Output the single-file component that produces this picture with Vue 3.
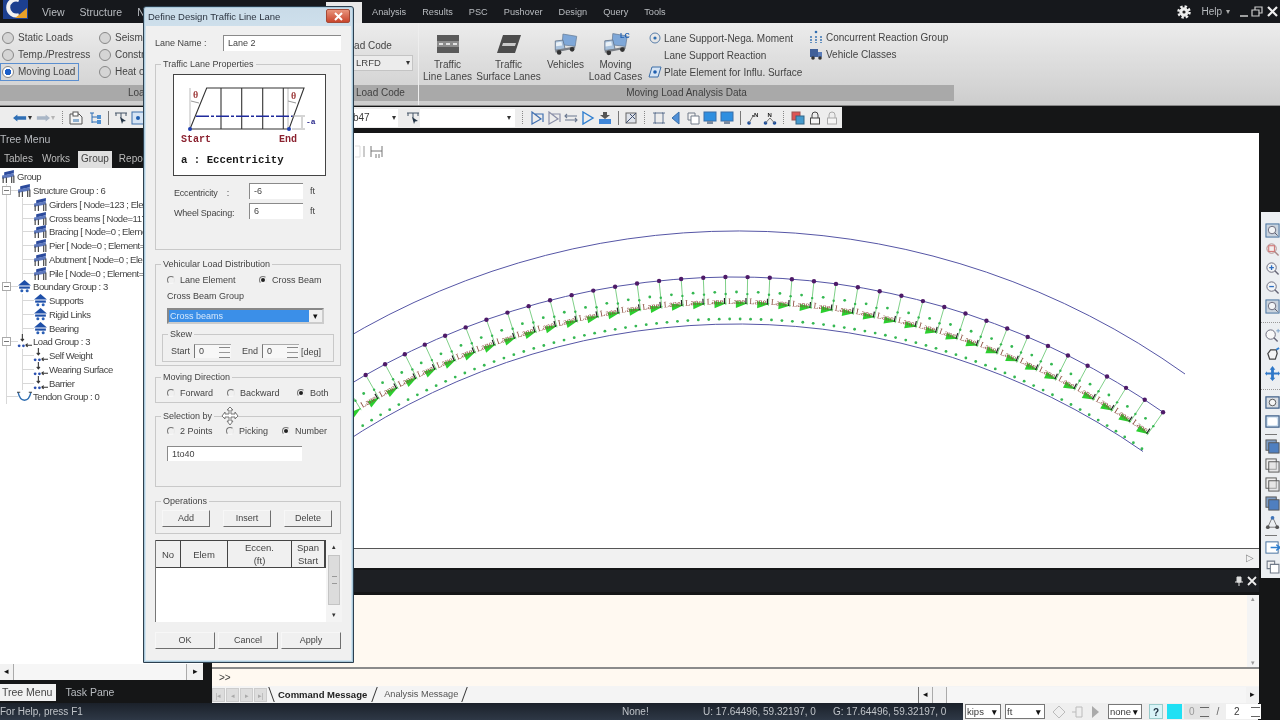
<script setup>
const leftMenu = ['View', 'Structure', 'Node']
const rightMenu = ['Analysis', 'Results', 'PSC', 'Pushover', 'Design', 'Query', 'Tools']

const treeRows = [
  { label: 'Group', icon: 'i-bridge', level: 0 },
  { label: 'Structure Group : 6', icon: 'i-bridge', level: 1, box: true },
  { label: 'Girders [ Node=123 ; Element=120 ]', icon: 'i-bridge', level: 2 },
  { label: 'Cross beams [ Node=117 ; Element=78 ]', icon: 'i-bridge', level: 2 },
  { label: 'Bracing [ Node=0 ; Element=0 ]', icon: 'i-bridge', level: 2 },
  { label: 'Pier [ Node=0 ; Element=0 ]', icon: 'i-bridge', level: 2 },
  { label: 'Abutment [ Node=0 ; Element=0 ]', icon: 'i-bridge', level: 2 },
  { label: 'Pile [ Node=0 ; Element=0 ]', icon: 'i-bridge', level: 2 },
  { label: 'Boundary Group : 3', icon: 'i-house', level: 1, box: true },
  { label: 'Supports', icon: 'i-house', level: 2 },
  { label: 'Rigid Links', icon: 'i-house', level: 2 },
  { label: 'Bearing', icon: 'i-house', level: 2 },
  { label: 'Load Group : 3', icon: 'i-load', level: 1, box: true },
  { label: 'Self Weight', icon: 'i-load', level: 2 },
  { label: 'Wearing Surface', icon: 'i-load', level: 2 },
  { label: 'Barrier', icon: 'i-load', level: 2 },
  { label: 'Tendon Group : 0', icon: 'i-tendon', level: 1 }
]

const toolsA = ['i-check', 'i-check2', 'i-swap', 'i-play', 'i-stack', 'sep', 'i-diag', 'grip', 'i-frame', 'i-left', 'i-copy', 'i-screen', 'i-screen', 'sep', 'i-north', 'i-north2', 'grip', 'i-pages', 'i-lock', 'i-lock2']
const railTools = ['i-zoombox', 'i-zoomred', 'i-zoomin', 'i-zoomout', 'i-zoombox', 'grip', 'i-lens', 'i-orbit', 'i-pan', 'grip', 'i-view', 'i-view2', 'line', 'i-cube', 'i-cube2', 'i-cube2', 'i-cube', 'i-axes', 'line', 'i-enter', 'i-copy']

// bridge deck, all in page coordinates so the svg viewBox can be the canvas rect
const CX = 735
const CY = 1022
const R = 745
const STEP = 1.705
const rad = d => (d * Math.PI) / 180
const at = (r, a) => [CX + r * Math.sin(rad(a)), CY - r * Math.cos(rad(a))]
const fmt = p => p.map(n => n.toFixed(1)).join(' ')

const stations = []
for (let i = 0; i < 40; i++) stations.push(35.07 - i * STEP)

const spokes = stations.map(a => {
  const [x1, y1] = at(R, a)
  const [x2, y2] = at(R - 28, a)
  return { x1, y1, x2, y2 }
})
const topDots = stations.map(a => at(R, a))
const spokeDots = stations.map(a => at(R - 17, a))
const midDots = stations.map(a => at(R - 15, a - STEP / 2))
const lowDots = []
for (let i = 0; i < 80; i++) lowDots.push(at(R - 42, 35.37 - (i * STEP) / 2))

const wedges = stations.map(a =>
  [at(R - 26, a + 0.1), at(R - 31, a - 0.9), at(R - 24, a - 0.9)].map(fmt).join(',')
)
const ticks = stations.slice(0, 39).map(a => {
  const [x1, y1] = at(R - 21, a - 0.1)
  const [x2, y2] = at(R - 27, a - 0.1)
  return { x1, y1, x2, y2 }
})
const labels = stations.slice(0, 39).map(a => {
  const [x, y] = at(R - 25, a - STEP / 2)
  return { x, y, rot: a - STEP / 2 }
})

const arc = (cx, cy, r, x1, x2) => {
  const y = x => cy - Math.sqrt(r * r - (x - cx) * (x - cx))
  return `M${x1} ${y(x1).toFixed(1)}A${r} ${r} 0 0 1 ${x2} ${y(x2).toFixed(1)}`
}
const outerLine = arc(738, 1001, 770, 340, 1185)
const upperEdge = arc(CX, CY, R, 340, 1163)
const lowerEdge = arc(737, 1034, 710, 340, 1143)
</script>

<template>
  <div class="app">
    <!-- shared icons -->
    <svg class="defs" width="0" height="0">
      <symbol id="i-bridge" viewBox="0 0 14 14"><path d="M3 3l9-2v3l-9 2z" fill="#2b4a9c"/><path d="M1 6l11-2v3L1 9z" fill="#5d78bd"/><path d="M2 8v5M5 8v5M10 7v6M12 6v7" stroke="#333" fill="none"/></symbol>
      <symbol id="i-house" viewBox="0 0 14 14"><path d="M7 1l6 5H1z" fill="#1e4fa8"/><rect x="2" y="7" width="10" height="2" fill="#1e4fa8"/><circle cx="4.500" cy="11" r="1.400" fill="#2b5fb5"/><circle cx="9.500" cy="11" r="1.400" fill="#2b5fb5"/></symbol>
      <symbol id="i-load" viewBox="0 0 14 14"><path d="M5 0v6M3.500 4.500L5 6.500l1.500-2M8 10.500h6M8 10.500l2-1.500M8 10.500l2 1.500" stroke="#333" fill="none"/><circle cx="2" cy="11" r="1.300" fill="#2a50b0"/><circle cx="6" cy="11" r="1.300" fill="#2a50b0"/></symbol>
      <symbol id="i-tendon" viewBox="0 0 14 14"><path d="M1 3c2 10 10 10 12 0" stroke="#2f6db0" fill="none" stroke-width="1.300"/><path d="M0 3h3M11 3h3" stroke="#444"/></symbol>
      <symbol id="i-check" viewBox="0 0 14 14"><path d="M2 1v12l9-5zM5 3h8v8" fill="none" stroke="#3f6fb0" stroke-width="1.200"/></symbol>
      <symbol id="i-check2" viewBox="0 0 14 14"><path d="M2 1v12l9-5zM5 3h8v8" fill="none" stroke="#8a8fa8" stroke-width="1.200"/></symbol>
      <symbol id="i-swap" viewBox="0 0 14 14"><path d="M1 5h12M1 9h12M3 3L1 5l2 2M11 7l2 2-2 2" fill="none" stroke="#6a7890" stroke-width="1.100"/></symbol>
      <symbol id="i-play" viewBox="0 0 14 14"><path d="M2 1l10 6-10 6z" fill="none" stroke="#2f7fd0" stroke-width="1.400"/></symbol>
      <symbol id="i-stack" viewBox="0 0 14 14"><path d="M5 1h4v3h3l-5 4-5-4h3z" fill="#555"/><rect x="1" y="8" width="12" height="5" fill="#3f86d8"/></symbol>
      <symbol id="i-diag" viewBox="0 0 14 14"><rect x="2" y="2" width="10" height="10" fill="#dfe3ea" stroke="#666"/><path d="M2 12L12 2M6 3l5 5" stroke="#405070"/></symbol>
      <symbol id="i-frame" viewBox="0 0 14 14"><path d="M3 2h8v10H3zM1 2h3M10 2h3M1 12h3M10 12h3" fill="none" stroke="#5f7390"/></symbol>
      <symbol id="i-left" viewBox="0 0 14 14"><path d="M10 1v12L3 7z" fill="#4f90d8" stroke="#3a6fa8"/></symbol>
      <symbol id="i-copy" viewBox="0 0 14 14"><path d="M2 2h7v7H2z" fill="#f3f3f3" stroke="#707a88"/><path d="M5 5h8v8H5z" fill="#fff" stroke="#707a88"/></symbol>
      <symbol id="i-screen" viewBox="0 0 14 14"><rect x="1" y="1" width="12" height="9" fill="#2f8fe0" stroke="#3a6fa8"/><rect x="4" y="10" width="6" height="3" fill="#7a8aa0"/></symbol>
      <symbol id="i-north" viewBox="0 0 14 14"><circle cx="3" cy="12" r="1.800" fill="#1d4f9c"/><circle cx="7" cy="5" r="1" fill="#333"/><path d="M3 12l4-7" stroke="#777"/><text x="8" y="6" font-size="6" font-family="Liberation Sans" font-weight="700" fill="#222">N</text></symbol>
      <symbol id="i-north2" viewBox="0 0 14 14"><circle cx="2.500" cy="12" r="1.800" fill="#1d4f9c"/><circle cx="11.500" cy="12" r="1.800" fill="#1d4f9c"/><path d="M2.500 12L7 7l4.500 5" stroke="#777" fill="none"/><text x="4.500" y="6" font-size="6" font-family="Liberation Sans" font-weight="700" fill="#222">N</text></symbol>
      <symbol id="i-pages" viewBox="0 0 14 14"><rect x="1" y="1" width="8" height="8" fill="#d55" stroke="#955"/><rect x="5" y="5" width="8" height="8" fill="#49c" stroke="#368"/></symbol>
      <symbol id="i-lock" viewBox="0 0 14 14"><path d="M4 7V4a3 3 0 016 0v3" fill="none" stroke="#444"/><rect x="2.500" y="7" width="9" height="6" fill="#f5f5f5" stroke="#444"/></symbol>
      <symbol id="i-lock2" viewBox="0 0 14 14"><path d="M4 7V4a3 3 0 016 0v3" fill="none" stroke="#aaa"/><rect x="2.500" y="7" width="9" height="6" fill="#f5f5f5" stroke="#aaa"/></symbol>
      <symbol id="i-zoombox" viewBox="0 0 16 16"><rect x="1" y="1" width="14" height="14" fill="#c9d3de" stroke="#3f6c9c"/><circle cx="7.500" cy="7.500" r="4" fill="#f2f4f6" stroke="#667"/><path d="M10.500 10.500l3 3" stroke="#556"/></symbol>
      <symbol id="i-zoomred" viewBox="0 0 16 16"><circle cx="7" cy="7" r="5" fill="#f2eeee" stroke="#a88"/><path d="M10.500 10.500l4 4" stroke="#a88" stroke-width="1.500"/><rect x="4" y="4" width="6" height="6" fill="none" stroke="#c66"/></symbol>
      <symbol id="i-zoomin" viewBox="0 0 16 16"><circle cx="7" cy="7" r="5" fill="#f2f4f6" stroke="#667"/><path d="M10.500 10.500l4 4" stroke="#667" stroke-width="1.500"/><path d="M4.500 7h5M7 4.500v5" stroke="#2f6fc0" stroke-width="1.400"/></symbol>
      <symbol id="i-zoomout" viewBox="0 0 16 16"><circle cx="7" cy="7" r="5" fill="#f2f4f6" stroke="#667"/><path d="M10.500 10.500l4 4" stroke="#667" stroke-width="1.500"/><path d="M4.500 7h5" stroke="#2f6fc0" stroke-width="1.400"/></symbol>
      <symbol id="i-lens" viewBox="0 0 16 16"><circle cx="6" cy="7" r="5" fill="#f8f8f8" stroke="#667"/><path d="M9.500 10.500l4 4" stroke="#667" stroke-width="1.500"/><path d="M12 3h4M14 1v4" stroke="#7aa0c8"/></symbol>
      <symbol id="i-orbit" viewBox="0 0 16 16"><path d="M3 7l3-4h6l1 4-2 6H5z" fill="#f4f4f4" stroke="#444" stroke-width="1.300"/><path d="M12 3l3-2" stroke="#2f7fd0" stroke-width="2"/></symbol>
      <symbol id="i-pan" viewBox="0 0 16 16"><path d="M8 0l3 4H9.500v3H14V5.500l2 2.500-2 2.500V9H9.500v3.500H11L8 16l-3-3.500h1.500V9H2v1.500L0 8l2-2.500V7h4.500V4H5z" fill="#2f78c8"/></symbol>
      <symbol id="i-view" viewBox="0 0 16 16"><rect x="1" y="2" width="14" height="12" fill="#d8dde3" stroke="#3f5f88" stroke-width="1.300"/><circle cx="8" cy="8" r="3.500" fill="#f5f5f5" stroke="#555"/></symbol>
      <symbol id="i-view2" viewBox="0 0 16 16"><rect x="1" y="2" width="14" height="12" fill="#cfe0f0" stroke="#3f5f88" stroke-width="1.300"/><rect x="3" y="4" width="10" height="8" rx="2" fill="#fff"/></symbol>
      <symbol id="i-cube" viewBox="0 0 16 16"><rect x="1" y="1" width="11" height="11" fill="#7f9dc4" stroke="#555"/><rect x="4" y="4" width="11" height="11" fill="#4f7fc0" stroke="#555"/></symbol>
      <symbol id="i-cube2" viewBox="0 0 16 16"><rect x="1" y="1" width="11" height="11" fill="#eee" stroke="#555"/><rect x="4" y="4" width="11" height="11" fill="#ddd" fill-opacity=".5" stroke="#555"/></symbol>
      <symbol id="i-axes" viewBox="0 0 16 16"><path d="M8 2L3 13M8 2l5 11M3 13h10" stroke="#777" fill="none"/><circle cx="8" cy="3" r="2" fill="#3f74b8"/><circle cx="3" cy="13" r="2" fill="#555"/><circle cx="13" cy="13" r="2" fill="#555"/></symbol>
      <symbol id="i-enter" viewBox="0 0 16 16"><rect x="1" y="2" width="13" height="12" fill="#fff" stroke="#3f6c9c"/><path d="M6 8h10M12 5l4 3-4 3" stroke="#2f7fd0" stroke-width="1.500" fill="none"/></symbol>
      <symbol id="i-truck" viewBox="0 0 34 30"><path d="M13 2l18 3-2 13-17-2z" fill="#7ea7d8" stroke="#6b7f99"/><path d="M3 11l10-1 3 12-13 1z" fill="#a9c2dd" stroke="#5d6f85"/><path d="M4 13l7-1 1 5-8 1z" fill="#e9f0f6"/><path d="M3 23l26-5v3L3 26z" fill="#7b8087"/><circle cx="8" cy="26" r="3" fill="#333"/><circle cx="25" cy="22" r="3" fill="#333"/></symbol>
    </svg>

    <header class="menu-bar">
      <svg class="logo" width="30" height="22" viewBox="0 0 30 22">
        <rect x="2" y="-2" width="25" height="21" fill="#1c3f8f"/>
        <path d="M18 0a8 8 0 100 15" fill="none" stroke="#f2f2f2" stroke-width="4"/>
        <path d="M19 14l7-6v10H14z" fill="#e8a028"/>
      </svg>
      <nav class="menu-left">
        <span v-for="m in leftMenu" :key="m">{{ m }}</span>
        <span class="menu-active"></span>
      </nav>
      <nav class="menu-right">
        <span v-for="m in rightMenu" :key="m">{{ m }}</span>
      </nav>
      <div class="win-box">
        <svg width="14" height="14" viewBox="0 0 14 14"><circle cx="7" cy="7" r="4.200" fill="#eee" stroke="#eee" stroke-width="1"/><circle cx="7" cy="7" r="5.500" fill="none" stroke="#eee" stroke-width="2.500" stroke-dasharray="2.400 1.900"/><circle cx="7" cy="7" r="1.600" fill="#222"/></svg>
        <span class="help">Help</span>
        <span class="caret-sm">▾</span>
        <svg width="46" height="14" viewBox="0 0 46 14">
          <path d="M6 11h8" stroke="#ccc" stroke-width="1.500"/>
          <path d="M18 5h7v6h-7zM21 5V2h7v6h-3" fill="none" stroke="#ccc" stroke-width="1.200"/>
          <path d="M34 2l9 9M43 2l-9 9" stroke="#eee" stroke-width="2.200"/>
        </svg>
      </div>
    </header>

    <section class="ribbon">
      <div class="panel panel-load">
        <div class="panel-body load-types">
          <div class="load-col">
            <label class="ribbon-radio">Static Loads</label>
            <label class="ribbon-radio">Temp./Prestress</label>
            <label class="ribbon-radio selected">Moving Load</label>
          </div>
          <div class="load-col second">
            <label class="ribbon-radio">Seismic</label>
            <label class="ribbon-radio">Construction</label>
            <label class="ribbon-radio">Heat of Hydration</label>
          </div>
        </div>
        <div class="panel-foot foot-load">Load Type</div>
      </div>
      <div class="panel panel-code">
        <div class="panel-body code-body">
          <div class="code-label">Load Code</div>
          <div class="code-select">LRFD<span class="caret-sm dark">▾</span></div>
        </div>
        <div class="panel-foot foot-code">Load Code</div>
      </div>
      <div class="panel panel-moving">
        <div class="panel-body moving-body">
          <div class="big w57">
            <svg width="24" height="18" viewBox="0 0 24 18"><rect x="1" width="22" height="18" fill="#5a5a5a"/><rect x="1" y="6" width="22" height="6" fill="#8c8c8c"/><path d="M3 9h4M10 9h4M17 9h4" stroke="#e2e2e2" stroke-width="2"/></svg>
            <span>Traffic<br>Line Lanes</span>
          </div>
          <div class="big w65">
            <svg width="24" height="18" viewBox="0 0 24 18"><path d="M6 0h18l-6 18H0z" fill="#4c4c4c"/><path d="M6 8h13l-1 3H5z" fill="#c9c9c9"/></svg>
            <span>Traffic<br>Surface Lanes</span>
          </div>
          <div class="big w49">
            <svg width="26" height="24" viewBox="0 0 34 30"><use href="#i-truck"/></svg>
            <span>Vehicles</span>
          </div>
          <div class="big w51">
            <svg width="30" height="26" viewBox="0 0 34 30"><use href="#i-truck"/><text x="22" y="8" font-size="9" font-weight="700" font-family="Liberation Sans" fill="#1f5fb0">LC</text></svg>
            <span>Moving<br>Load Cases</span>
          </div>
          <div class="small-col first">
            <div class="small-item">
              <svg width="14" height="14" viewBox="0 0 14 14"><circle cx="7" cy="7" r="5" fill="none" stroke="#5a7faa"/><circle cx="7" cy="7" r="1.600" fill="#2f6db0"/></svg>
              Lane Support-Nega. Moment
            </div>
            <div class="small-item"><i class="no-icon"></i>Lane Support Reaction</div>
            <div class="small-item">
              <svg width="14" height="14" viewBox="0 0 14 14"><path d="M4 2h9l-3 10H1z" fill="#d6e4f4" stroke="#3d6ea8"/><circle cx="7" cy="7" r="1.800" fill="#1f5fb0"/></svg>
              Plate Element for Influ. Surface
            </div>
          </div>
          <div class="small-col second">
            <div class="small-item">
              <svg width="14" height="14" viewBox="0 0 14 14"><circle cx="7" cy="2" r="1.300" fill="#2f6db0"/><path d="M2 6v7M7 6v7M12 6v7" stroke="#2f6db0" stroke-width="1.400" stroke-dasharray="2 1"/></svg>
              Concurrent Reaction Group
            </div>
            <div class="small-item">
              <svg width="14" height="14" viewBox="0 0 14 14"><rect x="1" y="2" width="8" height="8" fill="#3f5f98"/><path d="M9 5h4v5H9z" fill="#5a7cb8"/><circle cx="4" cy="11" r="1.800" fill="#333"/><circle cx="11" cy="11" r="1.800" fill="#333"/></svg>
              Vehicle Classes
            </div>
          </div>
        </div>
        <div class="panel-foot">Moving Load Analysis Data</div>
      </div>
    </section>

    <section class="toolbars">
      <div class="strip">
        <div class="strip-left">
          <svg class="nav-arrow" width="14" height="10" viewBox="0 0 16 10"><path d="M0 5l5-4v2h10v4H5v2z" fill="#2f6fb5"/></svg>
          <span class="caret-sm dark">▾</span>
          <svg class="nav-arrow" width="14" height="10" viewBox="0 0 16 10"><path d="M16 5l-5-4v2H1v4h10v2z" fill="#a9b6c6"/></svg>
          <span class="caret-sm faint">▾</span>
          <i class="grip"></i>
          <svg class="ico wide" viewBox="0 0 14 14"><path d="M1 3h9l3 3v7H1z" fill="#f4f4f4" stroke="#555"/><rect x="4" y="1" width="5" height="4" fill="#fff" stroke="#555"/><rect x="4" y="8" width="6" height="3" fill="#8fb0d0"/></svg>
          <svg class="ico" viewBox="0 0 14 14"><path d="M2 2h4M4 2v10M4 6h5M4 11h5" stroke="#2f6fb5" fill="none"/><rect x="9" y="4" width="4" height="4" fill="#4f8fd0"/><rect x="9" y="9" width="4" height="4" fill="#4f8fd0"/></svg>
          <i class="tool-sep"></i>
          <svg class="ico flat" viewBox="0 0 14 14"><path d="M1 2h12M7 2v5M2 2v3M12 2v3" stroke="#456" fill="none"/><path d="M6 6l6 4-3 .5L8 13z" fill="#234"/></svg>
          <svg class="ico" viewBox="0 0 14 14"><rect x="1" y="1" width="12" height="12" fill="#d6e4f4" stroke="#3d6ea8"/><circle cx="7" cy="7" r="2" fill="#1f5fb0"/></svg>
        </div>
        <div class="combo combo-a">b47<span class="caret-sm dark">▾</span></div>
        <svg class="ico cursor-ico" viewBox="0 0 14 14"><path d="M1 2h12M7 2v5M2 2v3M12 2v3" stroke="#456" fill="none"/><path d="M6 6l6 4-3 .5L8 13z" fill="#234"/></svg>
        <div class="combo combo-b"><span class="caret-sm dark">▾</span></div>
        <i class="grip"></i>
        <template v-for="(t, i) in toolsA" :key="i">
          <i v-if="t === 'sep'" class="tool-sep"></i>
          <i v-else-if="t === 'grip'" class="grip"></i>
          <svg v-else class="ico" viewBox="0 0 14 14"><use :href="'#' + t"/></svg>
        </template>
      </div>
    </section>

    <main class="work">
      <aside class="side">
        <div class="side-title">Tree Menu</div>
        <div class="side-tabs">
          <span>Tables</span><span>Works</span><span class="on">Group</span><span>Report</span>
        </div>
        <div class="tree">
          <div
            v-for="r in treeRows"
            :key="r.label"
            class="tree-row"
            :class="'lv' + r.level"
          >
            <i v-if="r.box" class="minus"></i>
            <svg class="tree-ico" viewBox="0 0 14 14"><use :href="'#' + r.icon"/></svg>
            <span>{{ r.label }}</span>
          </div>
        </div>
        <div class="side-scroll">
          <span class="sb-btn">◂</span>
          <span class="sb-track"></span>
          <span class="sb-btn">▸</span>
        </div>
        <div class="side-bottom">
          <span class="on">Tree Menu</span><span>Task Pane</span>
        </div>
      </aside>

      <div class="center">
        <div class="canvas">
          <svg class="drawing" viewBox="212 133 1047 415" width="1047" height="415">
            <path d="M355 146h5v11h-5" fill="none" stroke="#ddd"/>
            <path d="M364 146v11" stroke="#999"/>
            <path d="M371 146v11M382 146v11M371 151h11M376 154v4M379 154v4" stroke="#777" fill="none"/>

            <path :d="outerLine" class="edge"/>
            <path :d="upperEdge" class="edge"/>
            <path :d="lowerEdge" class="edge"/>
            <line v-for="(s, i) in spokes" :key="'s' + i" :x1="s.x1" :y1="s.y1" :x2="s.x2" :y2="s.y2" class="spoke"/>
            <circle v-for="(d, i) in midDots" :key="'m' + i" :cx="d[0]" :cy="d[1]" r="1.400" class="gdot"/>
            <circle v-for="(d, i) in spokeDots" :key="'p' + i" :cx="d[0]" :cy="d[1]" r="1.200" class="gdot"/>
            <circle v-for="(d, i) in lowDots" :key="'l' + i" :cx="d[0]" :cy="d[1]" r="1.400" class="gdot"/>
            <polygon v-for="(w, i) in wedges" :key="'w' + i" :points="w" class="wedge"/>
            <text
              v-for="(l, i) in labels"
              :key="'t' + i"
              :transform="`translate(${l.x.toFixed(1)} ${l.y.toFixed(1)}) rotate(${l.rot.toFixed(1)})`"
              class="lane-text"
            >Lane</text>
            <line v-for="(s, i) in ticks" :key="'k' + i" :x1="s.x1" :y1="s.y1" :x2="s.x2" :y2="s.y2" class="tick"/>
            <circle v-for="(d, i) in topDots" :key="'d' + i" :cx="d[0]" :cy="d[1]" r="2.200" class="pdot"/>
          </svg>
        </div>
        <div class="canvas-scroll"><span class="hollow-arrow">▷</span></div>
        <div class="out-title">
          <svg width="10" height="10" viewBox="0 0 10 10"><path d="M3 1h4v5H3zM1 6h8M5 6v4" stroke="#ddd" fill="#ddd"/></svg>
          <svg width="10" height="10" viewBox="0 0 10 10"><path d="M1 1l8 8M9 1L1 9" stroke="#eee" stroke-width="1.800"/></svg>
        </div>
        <div class="out-log"><span class="log-bar"><b>▴</b><b>▾</b></span></div>
        <div class="out-prompt">&gt;&gt;</div>
        <div class="out-tabs">
          <div class="nav-btns"><span>|◂</span><span>◂</span><span>▸</span><span>▸|</span></div>
          <span class="msg-tab active">Command Message</span>
          <span class="msg-tab other">Analysis Message</span>
          <div class="out-scroll">
            <span class="sb-btn">◂</span>
            <span class="sb-btn"></span>
            <span class="sb-track"></span>
            <span class="sb-btn">▸</span>
          </div>
        </div>
      </div>

      <div class="rail">
        <template v-for="(t, i) in railTools" :key="i">
          <i v-if="t === 'grip'" class="rail-grip"></i>
          <i v-else-if="t === 'line'" class="rail-line"></i>
          <svg v-else class="rail-ico" viewBox="0 0 16 16"><use :href="'#' + t"/></svg>
        </template>
      </div>
    </main>

    <footer class="status">
      <div class="status-dark">
        <span class="st-help">For Help, press F1</span>
        <span class="st-none">None!</span>
        <span class="st-u">U: 17.64496, 59.32197, 0</span>
        <span class="st-g">G: 17.64496, 59.32197, 0</span>
      </div>
      <div class="status-light">
        <div class="st-select w36">kips<b>▾</b></div>
        <div class="st-select w40">ft<b>▾</b></div>
        <svg class="st-ico" viewBox="0 0 14 14"><path d="M7 1l6 6-6 6-6-6z" fill="none" stroke="#bbb"/></svg>
        <svg class="st-ico" viewBox="0 0 14 14"><path d="M2 7h4M6 2h6v10H6z" fill="none" stroke="#bbb"/></svg>
        <svg class="st-ico" viewBox="0 0 14 14"><path d="M4 1l7 6-7 6z" fill="#aaa"/></svg>
        <div class="st-select w33">none<b>▾</b></div>
        <span class="st-q">?</span>
        <span class="st-color"></span>
        <div class="st-spin off">0<i></i></div>
        <span class="st-slash">/</span>
        <div class="st-spin">2<i></i></div>
      </div>
    </footer>

    <!-- floating dialog -->
    <div class="dialog">
      <div class="dlg-title">
        <span>Define Design Traffic Line Lane</span>
        <span class="dlg-close">
          <svg width="9" height="9" viewBox="0 0 9 9"><path d="M1 1l7 7M8 1L1 8" stroke="#fff" stroke-width="2"/></svg>
        </span>
      </div>
      <div class="dlg-body">
        <div class="name-row">
          <label>Lane Name :</label>
          <div class="field name-field">Lane 2</div>
        </div>

        <fieldset class="fs fs-props">
          <legend>Traffic Lane Properties</legend>
          <svg class="lane-pic" viewBox="173 75 153 102" width="153" height="102">
            <path d="M190 89v41M288 89v41" stroke="#bbb"/>
            <path d="M190 130l16.700-41H304l-15 41zM221 89v41M241.700 89v41M262.700 89v41M283.300 89v41" fill="none" stroke="#333" stroke-width="1.100"/>
            <path d="M196 117.300h97" stroke="#1f2a9c" stroke-width="1.600" stroke-dasharray="13 2 3 2"/>
            <circle cx="190" cy="130" r="2" fill="#1f3fb0"/>
            <circle cx="289" cy="130" r="2" fill="#1f3fb0"/>
            <path d="M292 117h13M292 130h13M302 118v11" stroke="#aaa"/>
            <path d="M191 102l8 2M288 102l8 2" stroke="#999"/>
            <text x="193" y="99" class="pic-theta">θ</text>
            <text x="291" y="100" class="pic-theta">θ</text>
            <text x="306" y="125" class="pic-a">-a</text>
            <text x="181" y="143" class="pic-start">Start</text>
            <text x="279" y="143" class="pic-start">End</text>
            <text x="181" y="164" class="pic-ecc">a : Eccentricity</text>
          </svg>
          <div class="prop-row first">
            <label class="ecc-label"><span>Eccentricity</span><span>:</span></label>
            <div class="field prop-field">-6</div>
            <span>ft</span>
          </div>
          <div class="prop-row">
            <label>Wheel Spacing:</label>
            <div class="field prop-field">6</div>
            <span>ft</span>
          </div>
        </fieldset>

        <fieldset class="fs fs-vehicular">
          <legend>Vehicular Load Distribution</legend>
          <div class="opts opts-two">
            <span class="opt"><i class="radio"></i>Lane Element</span>
            <span class="opt"><i class="radio checked"></i>Cross Beam</span>
          </div>
          <div class="group-label">Cross Beam Group</div>
          <div class="cb-select">
            <span class="cb-value">Cross beams</span>
            <span class="cb-btn">▾</span>
          </div>
          <fieldset class="fs fs-skew">
            <legend>Skew</legend>
            <div class="skew-row">
              <span>Start</span>
              <div class="spin">0<i></i></div>
              <span class="skew-end">End</span>
              <div class="spin">0<i></i></div>
              <span class="deg">[deg]</span>
            </div>
          </fieldset>
        </fieldset>

        <fieldset class="fs fs-moving">
          <legend>Moving Direction</legend>
          <div class="opts opts-three">
            <span class="opt"><i class="radio"></i>Forward</span>
            <span class="opt"><i class="radio"></i>Backward</span>
            <span class="opt"><i class="radio checked"></i>Both</span>
          </div>
        </fieldset>

        <fieldset class="fs fs-selection">
          <legend>Selection by</legend>
          <div class="opts opts-sel">
            <span class="opt"><i class="radio"></i>2 Points</span>
            <span class="opt"><i class="radio"></i>Picking</span>
            <span class="opt"><i class="radio checked"></i>Number</span>
          </div>
          <div class="field number-field">1to40</div>
        </fieldset>

        <fieldset class="fs fs-ops">
          <legend>Operations</legend>
          <div class="ops-row">
            <span class="btn">Add</span>
            <span class="btn">Insert</span>
            <span class="btn">Delete</span>
          </div>
        </fieldset>

        <div class="table">
          <div class="t-main">
            <div class="t-head">
              <span>No</span><span>Elem</span><span>Eccen.<br>(ft)</span><span>Span<br>Start</span>
            </div>
          </div>
          <div class="t-scroll">
            <span class="up">▴</span>
            <span class="thumb"><b></b></span>
            <span class="down">▾</span>
          </div>
        </div>

        <div class="dlg-actions">
          <span class="btn">OK</span>
          <span class="btn">Cancel</span>
          <span class="btn">Apply</span>
        </div>
      </div>
    </div>

    <!-- move cursor over the dialog -->
    <svg class="move-cursor" width="18" height="20" viewBox="0 0 18 20">
      <path d="M9 1l3 3h-2v4h4V6l3 4-3 3v-2h-4v4h2l-3 4-3-4h2v-4H4v2l-3-3 3-4v2h4V4H6z" fill="#fff" stroke="#777"/>
    </svg>
  </div>
</template>

<style>
html, body { margin: 0; background: #151617; }
</style>

<style scoped>
.app {
  position: relative;
  width: 1280px;
  height: 720px;
  overflow: hidden;
  display: flex;
  flex-direction: column;
  background: #151617;
  color: #3a3a3a;
  font-family: "Liberation Sans", Arial, sans-serif;
  font-size: 10px;
  filter: blur(0.35px);
}
.defs { display: none; }
i { font-style: normal; }

/* menu bar */
.menu-bar {
  height: 23px;
  flex: none;
  display: flex;
  align-items: center;
  background: #16181c;
  color: #b9bcc0;
}
.logo { width: 32px; flex: none; align-self: flex-start; }
.menu-left {
  width: 330px;
  height: 23px;
  flex: none;
  display: flex;
  align-items: center;
  gap: 15px;
  padding-left: 10px;
  box-sizing: border-box;
  overflow: hidden;
  font-size: 10.5px;
}
.menu-active {
  margin-left: auto;
  width: 36px;
  height: 21px;
  align-self: flex-end;
  background: #e9e9e9;
}
.menu-right { display: flex; gap: 16px; padding-left: 10px; font-size: 9.2px; }
.win-box {
  margin-left: auto;
  display: flex;
  align-items: center;
  gap: 4px;
}
.help { margin-left: 6px; }
.caret-sm { font-size: 8px; color: #aaa; }
.caret-sm.dark { color: #333; }
.caret-sm.faint { color: #b5b5b5; }

/* ribbon */
.ribbon {
  height: 83px;
  flex: none;
  display: flex;
  background: linear-gradient(#ececec, #cdcdcd);
  border-bottom: 1px solid #888;
  box-sizing: border-box;
  color: #444;
}
.panel { display: flex; flex-direction: column; }
.panel-body { height: 62px; flex: none; }
.panel-foot {
  height: 16px;
  background: #a9a9a9;
  text-align: center;
  line-height: 16px;
  color: #3f3f3f;
}
.panel-load { width: 346px; }
.foot-load { text-align: left; padding-left: 128px; }
.panel-code { width: 72px; }
.foot-code { text-align: left; padding-left: 10px; }
.panel-moving { width: 535px; border-left: 1px solid #eee; }
.load-types { display: flex; padding-top: 8px; box-sizing: border-box; }
.load-col { display: flex; flex-direction: column; gap: 3px; padding-left: 2px; width: 97px; flex: none; }
.load-col.second { padding-left: 0; }
.ribbon-radio {
  position: relative;
  height: 14px;
  line-height: 14px;
  padding-left: 16px;
  font-size: 10px;
  white-space: nowrap;
}
.ribbon-radio::before {
  content: "";
  position: absolute;
  left: 0;
  top: 1px;
  width: 10px;
  height: 10px;
  border: 1px solid #888;
  border-radius: 50%;
  background: #d5d5d5;
}
.ribbon-radio.selected {
  width: 59px;
  outline: 1px solid #5b8fd0;
  outline-offset: 1px;
}
.ribbon-radio.selected::before { background: radial-gradient(circle, #1d5fc8 45%, #fff 50%); }
.code-body { padding: 16px 0 0; box-sizing: border-box; }
.code-label { height: 16px; line-height: 14px; white-space: nowrap; margin-left: -3px; }
.code-select {
  width: 67px;
  height: 16px;
  line-height: 14px;
  font-size: 9.5px;
  padding: 0 2px 0 9px;
  box-sizing: border-box;
  background: #ececec;
  border: 1px solid #c4c4c4;
  display: flex;
  justify-content: space-between;
}
.moving-body { display: flex; }
.big {
  flex: none;
  display: flex;
  flex-direction: column;
  align-items: center;
  text-align: center;
  line-height: 12px;
  padding-top: 9px;
  box-sizing: border-box;
  height: 62px;
  white-space: nowrap;
}
.big svg { height: 24px; margin-bottom: 3px; flex: none; }
.w57 { width: 57px; }
.w65 { width: 65px; }
.w49 { width: 49px; }
.w51 { width: 51px; }
.small-col { display: flex; flex-direction: column; gap: 3px; padding-top: 7px; white-space: nowrap; }
.small-col.first { width: 168px; padding: 8px 0 0 7px; flex: none; box-sizing: border-box; }
.small-item { height: 14px; display: flex; align-items: center; gap: 2px; font-size: 10px; }
.small-col.second .small-item { gap: 3px; }
.no-icon { width: 14px; flex: none; }

/* toolbars */
.toolbars { height: 24px; flex: none; display: flex; align-items: flex-start; padding-top: 1px; box-sizing: border-box; }
.strip {
  width: 842px;
  height: 21px;
  background: #ededed;
  display: flex;
  align-items: center;
  box-sizing: border-box;
}
.strip-left { width: 350px; flex: none; display: flex; align-items: center; padding-left: 13px; box-sizing: border-box; }
.nav-arrow { flex: none; margin-right: 1px; }
.strip-left .caret-sm { width: 8px; flex: none; }
.strip-left .grip { margin: 0 6px 0 3px; }
.ico { width: 14px; height: 14px; flex: none; margin-right: 3px; }
.ico.wide { margin-right: 5px; }
.grip { width: 1px; height: 13px; flex: none; margin: 0 7px 0 3px; border-left: 1px dotted #888; box-sizing: border-box; }
.tool-sep { width: 1px; height: 14px; flex: none; background: #777; margin: 0 5px 0 3px; }
.combo {
  height: 18px;
  line-height: 18px;
  background: #fff;
  flex: none;
  display: flex;
  justify-content: space-between;
  box-sizing: border-box;
  padding: 0 2px 0 3px;
}
.combo-a { width: 48px; }
.cursor-ico { margin: 0 0 0 8px; }
.combo-b { width: 95px; justify-content: flex-end; padding-right: 4px; margin-right: 4px; }

/* work area */
.work { flex: 1; min-height: 0; display: flex; }
.side { width: 203px; flex: none; display: flex; flex-direction: column; }
.side-title { height: 18px; line-height: 18px; color: #b8bbbf; font-size: 10.5px; margin-top: 0; }
.side-tabs { height: 17px; display: flex; align-items: stretch; margin-top: 3px; color: #bbb; padding-left: 3px; gap: 0; }
.side-tabs span { padding: 2px 7px 0 1px; margin-right: 1px; }
.side-tabs .on { background: #dfdfdf; color: #444; padding: 2px 3px 0; margin-right: 6px; }
.tree { flex: 1; min-height: 0; background: #fff; padding-top: 2px; overflow: hidden; color: #444; }
.tree-row {
  position: relative;
  height: 13.75px;
  display: flex;
  align-items: center;
  white-space: nowrap;
  font-size: 9.5px;
  letter-spacing: -0.45px;
  --ln: linear-gradient(#d8d8d8, #d8d8d8);
}
.tree-ico { width: 15px; height: 15px; flex: none; margin-right: 1px; }
.lv0 { padding-left: 1px; }
.lv1 {
  padding-left: 17px;
  background: var(--ln) 6px 0 / 1px 100% no-repeat, var(--ln) 6px 50% / 12px 1px no-repeat;
}
.lv2 {
  padding-left: 33px;
  background: var(--ln) 6px 0 / 1px 100% no-repeat, var(--ln) 22px 0 / 1px 100% no-repeat, var(--ln) 22px 50% / 12px 1px no-repeat;
}
.minus {
  position: absolute;
  left: 2px;
  top: 2px;
  width: 7px;
  height: 7px;
  border: 1px solid #aaa;
  background: linear-gradient(#777, #777) center / 5px 1px no-repeat, #fff;
}
.side-scroll { height: 16px; background: #f2f2f2; display: flex; flex: none; }
.sb-btn {
  width: 13px;
  flex: none;
  text-align: center;
  font-size: 9px;
  line-height: 15px;
  color: #111;
  border-right: 1px solid #aaa;
  background: #f2f2f2;
}
.sb-track { flex: 1; background: #f6f6f6; }
.side-scroll .sb-btn:last-child { border-left: 1px solid #aaa; border-right: 0; width: 16px; }
.side-bottom { height: 23px; display: flex; align-items: flex-start; padding-top: 4px; box-sizing: border-box; color: #b9bcc0; flex: none; }
.side-bottom span { padding: 0 8px 0 6px; height: 17px; line-height: 17px; font-size: 10.5px; }
.side-bottom .on { background: #f1f1f1; color: #444; padding: 0 4px 0 2px; margin-right: 3px; }

.center { width: 1047px; margin-left: 9px; flex: none; display: flex; flex-direction: column; padding-top: 3px; box-sizing: border-box; }
.canvas { height: 415px; flex: none; background: #fff; }
.drawing { display: block; }
.edge { fill: none; stroke: #5656a6; stroke-width: 1; }
.spoke { stroke: #7fd088; stroke-width: 1; }
.gdot { fill: #35b852; }
.wedge { fill: #2bcf2f; }
.tick { stroke: #222; stroke-width: 1.200; }
.pdot { fill: #4e1a68; }
.lane-text {
  font-family: "Liberation Serif", serif;
  font-size: 8.5px;
  fill: #8a4b3c;
  text-anchor: middle;
  dominant-baseline: middle;
}
.canvas-scroll {
  height: 20px;
  flex: none;
  background: #f1f1f1;
  border-top: 1px solid #555;
  box-sizing: border-box;
  text-align: right;
  padding-right: 5px;
  line-height: 18px;
  color: #888;
}
.out-title {
  height: 22px;
  flex: none;
  margin-top: 2px;
  background: #1d1f23;
  display: flex;
  align-items: center;
  justify-content: flex-end;
  gap: 3px;
  padding-right: 2px;
  box-sizing: border-box;
}
.out-log { flex: 1; background: #fff9f1; margin-top: 3px; border-bottom: 2px solid #8b8b8b; display: flex; justify-content: flex-end; }
.log-bar { width: 12px; background: #f4f4f4; display: flex; flex-direction: column; justify-content: space-between; align-items: center; font-size: 7px; color: #999; }
.log-bar b { font-weight: 400; }
.out-prompt { height: 17px; flex: none; background: #fff9f1; padding-left: 7px; line-height: 18px; font-size: 10px; box-sizing: border-box; }
.out-tabs { height: 17px; flex: none; background: #f4f4f4; display: flex; align-items: center; overflow: hidden; }
.nav-btns { display: flex; width: 56px; flex: none; gap: 1px; }
.nav-btns span { width: 13px; height: 14px; line-height: 14px; text-align: center; font-size: 7px; color: #aaa; background: #ddd; border: 1px solid #ccc; box-sizing: border-box; }
.msg-tab {
  position: relative;
  line-height: 17px;
  white-space: nowrap;
  flex: none;
}
.msg-tab::before, .msg-tab::after {
  content: "";
  position: absolute;
  top: 1px;
  height: 15px;
  width: 1px;
  background: #333;
}
.msg-tab.active {
  font-weight: 700;
  font-size: 9.5px;
  margin-left: 0;
  padding-left: 10px;
  color: #222;
}
.msg-tab.active::before { left: 3px; transform: skewX(20deg); }
.msg-tab.active::after { display: none; }
.msg-tab.other {
  margin-left: 2px;
  padding: 0 8px 0 15px;
  font-size: 9.2px;
  color: #555;
}
.msg-tab.other::before { left: 5px; transform: skewX(-20deg); }
.msg-tab.other::after { right: 1px; transform: skewX(-20deg); }
.out-scroll { margin-left: auto; width: 340px; height: 16px; display: flex; background: #f4f4f4; border-left: 1px solid #777; }
.out-scroll .sb-btn:last-child { border: 0; }

.rail {
  width: 19px;
  height: 366px;
  margin-top: 82px;
  margin-left: 2px;
  flex: none;
  background: #eceff2;
  display: flex;
  flex-direction: column;
  align-items: flex-end;
  padding-top: 11px;
  box-sizing: border-box;
}
.rail-ico { width: 15px; height: 15px; flex: none; margin-bottom: 4px; }
.rail-grip { width: 100%; height: 1px; border-top: 1px dotted #999; flex: none; margin: 4px 0 5px; box-sizing: border-box; }
.rail-line { width: 12px; height: 1px; background: #777; flex: none; margin: 1px 3px 4px 0; }

/* status */
.status { height: 17px; flex: none; display: flex; background: #151617; }
.status-dark {
  width: 963px;
  display: flex;
  align-items: center;
  color: #bfc3c8;
  background: linear-gradient(#1b212a, #2e3846);
  font-size: 10px;
  box-sizing: border-box;
  white-space: nowrap;
}
.st-help { width: 622px; flex: none; }
.st-none { width: 81px; flex: none; }
.st-u { width: 130px; flex: none; }
.st-g { flex: none; }
.status-light { width: 295px; background: #efefef; display: flex; align-items: center; padding-left: 2px; box-sizing: border-box; }
.st-select {
  flex: none;
  height: 15px;
  line-height: 14px;
  background: #fff;
  border: 1px solid #777;
  box-sizing: border-box;
  display: flex;
  justify-content: space-between;
  padding: 0 3px 0 1px;
  font-size: 9.5px;
  margin-right: 4px;
  overflow: hidden;
}
.st-select b { font-size: 9px; color: #111; }
.w36 { width: 36px; }
.w40 { width: 40px; margin-right: 7px; }
.w33 { width: 34px; margin-left: 2px; margin-right: 7px; }
.st-ico { width: 14px; height: 14px; flex: none; margin-right: 4px; }
.st-q { width: 14px; height: 15px; flex: none; text-align: center; line-height: 15px; background: #d9f4f8; border: 1px solid #9cc; box-sizing: border-box; color: #234; font-weight: 700; margin-right: 4px; }
.st-color { width: 15px; height: 15px; flex: none; background: #1fe0f4; margin-right: 2px; }
.st-spin {
  width: 35px;
  height: 15px;
  flex: none;
  line-height: 15px;
  background: #fff;
  position: relative;
  padding-left: 8px;
  box-sizing: border-box;
  font-size: 10px;
}
.st-spin.off { width: 26px; background: #e2e2e2; color: #999; padding-left: 5px; }
.st-spin i { position: absolute; right: 1px; top: 3px; width: 9px; height: 8px; border-top: 1px solid #666; border-bottom: 1px solid #666; }
.st-slash { width: 16px; flex: none; text-align: center; color: #666; }

/* dialog */
.dialog {
  position: absolute;
  left: 143px;
  top: 6px;
  width: 211px;
  height: 657px;
  box-sizing: border-box;
  background: linear-gradient(#c9dbe8, #d3e4ef 40px);
  border: 1px solid #2c3f4f;
  display: flex;
  flex-direction: column;
  border-radius: 3px 3px 0 0;
  box-shadow: inset 0 0 0 1px #a9c8da;
  font-size: 9px;
  color: #444;
}
.dlg-title {
  height: 19px;
  flex: none;
  display: flex;
  align-items: center;
  padding-left: 4px;
  font-size: 9.5px;
  color: #2c3440;
  position: relative;
}
.dlg-close {
  position: absolute;
  left: 182px;
  top: 2px;
  width: 24px;
  height: 14px;
  border-radius: 2px;
  background: linear-gradient(#e8947c, #c9452c);
  border: 1px solid #a44a36;
  box-sizing: border-box;
  display: flex;
  align-items: center;
  justify-content: center;
}
.dlg-body {
  flex: 1;
  margin: 0 2px 2px;
  background: #f0f0f0;
  padding: 0 10px 0 9px;
  display: flex;
  flex-direction: column;
}
.name-row { display: flex; align-items: center; height: 16px; margin-top: 9px; flex: none; }
.name-row label { width: 68px; flex: none; }
.field {
  background: #fff;
  border-top: 1px solid #8a8a8a;
  border-left: 1px solid #8a8a8a;
  box-sizing: border-box;
  padding-left: 4px;
  line-height: 14px;
  font-size: 9px;
}
.name-field { width: 118px; height: 16px; }
.fs {
  margin: 0;
  padding: 0;
  border: 1px solid #c9c9c9;
  box-sizing: border-box;
  flex: none;
  display: block;
  min-width: 0;
}
.fs legend { margin-left: 5px; padding: 0 2px; line-height: 11px; font-size: 9px; }
.fs-props { height: 191px; margin-top: 8px; }
.lane-pic {
  display: block;
  margin: 4px 0 0 17px;
  background: #fff;
  outline: 1px solid #444;
  outline-offset: -1px;
}
.pic-theta { font: 700 10px "Liberation Serif", serif; fill: #a04040; }
.pic-a { font: 700 8px "Liberation Mono", monospace; fill: #2a2a8c; }
.pic-start { font: 700 10px "Liberation Mono", monospace; fill: #8b2230; }
.pic-ecc { font: 700 10.7px "Liberation Mono", monospace; fill: #1a1a1a; }
.prop-row { display: flex; align-items: center; height: 16px; margin-top: 4px; padding-left: 18px; }
.prop-row.first { margin-top: 7px; }
.prop-row label { width: 75px; flex: none; letter-spacing: -0.2px; margin-top: 3px; }
.ecc-label { display: flex; gap: 9px; }
.prop-field { width: 54px; height: 16px; margin-right: 7px; }
.fs-vehicular { height: 107px; margin-top: 9px; }
.opts { display: grid; height: 14px; align-items: center; padding-left: 11px; }
.opts-two { grid-template-columns: 92px auto; margin-top: 3px; }
.opts-three { grid-template-columns: 60px 70px auto; margin-top: 3px; }
.opts-sel { grid-template-columns: 59px 56px auto; margin-top: 2px; }
.opt { display: flex; align-items: center; gap: 5px; white-space: nowrap; }
.radio {
  position: relative;
  width: 8px;
  height: 8px;
  flex: none;
  border-radius: 50%;
  border: 1px solid;
  border-color: #777 #e8e8e8 #f8f8f8 #777;
  box-sizing: border-box;
}
.radio.checked::after {
  content: "";
  position: absolute;
  left: 1px;
  top: 1px;
  width: 4px;
  height: 4px;
  border-radius: 50%;
  background: #222;
}
.group-label { margin: 3px 0 0 11px; height: 12px; line-height: 12px; }
.cb-select {
  margin: 6px 0 0 11px;
  width: 157px;
  height: 16px;
  display: flex;
  background: #fff;
  border: 2px solid;
  border-color: #888 #ccc #ccc #888;
  box-sizing: border-box;
}
.cb-value { flex: 1; background: #3b8fe8; color: #d6e8fb; line-height: 12px; padding-left: 1px; }
.cb-btn { width: 13px; text-align: center; color: #111; background: #f0f0f0; line-height: 12px; font-size: 9px; }
.fs-skew { height: 33px; width: 172px; margin: 5px 0 0 6px; }
.skew-row { display: flex; align-items: center; height: 16px; margin-top: 3px; padding-left: 8px; }
.spin {
  position: relative;
  width: 37px;
  height: 14px;
  line-height: 13px;
  padding-left: 4px;
  margin-left: 4px;
  background: #f7f7f7;
  border-left: 1px solid #777;
  border-top: 1px solid #aaa;
  box-sizing: border-box;
}
.spin i { position: absolute; right: 1px; top: 2px; width: 11px; height: 9px; border-top: 1px solid #888; border-bottom: 1px solid #888; background: linear-gradient(#999, #999) center / 100% 1px no-repeat; }
.skew-end { margin-left: 11px; }
.deg { margin-left: 2px; margin-top: 2px; }
.fs-moving { height: 31px; margin-top: 6px; }
.fs-selection { height: 76px; margin-top: 8px; }
.number-field { width: 135px; height: 15px; margin: 8px 0 0 11px; }
.fs-ops { height: 38px; margin-top: 9px; }
.ops-row { display: flex; gap: 13px; margin: 3px 0 0 6px; }
.btn {
  height: 17px;
  width: 48px;
  flex: none;
  background: #f0f0f0;
  border: 1px solid;
  border-color: #f7f7f7 #6f6f6f #6f6f6f #f7f7f7;
  box-sizing: border-box;
  text-align: center;
  line-height: 15px;
  color: #444;
}
.table { height: 82px; margin-top: 6px; display: flex; flex: none; }
.t-main { flex: 1; background: #fff; border-left: 1px solid #777; }
.t-head {
  height: 28px;
  display: grid;
  grid-template-columns: 25px 47px 64px 33px;
  background: #f0f0f0;
  border: 1px solid #444;
  border-left: 0;
  box-sizing: border-box;
}
.t-head span {
  border-right: 1px solid #444;
  display: flex;
  align-items: center;
  justify-content: center;
  text-align: center;
  font-size: 9.5px;
  line-height: 13px;
}
.t-scroll { width: 16px; flex: none; background: #f4f4f4; display: flex; flex-direction: column; align-items: center; font-size: 7px; color: #333; }
.t-scroll .up, .t-scroll .down { height: 14px; line-height: 14px; }
.thumb { width: 12px; height: 50px; margin: 1px 0; background: #dcdcdc; border: 1px solid #c4c4c4; box-sizing: border-box; display: flex; align-items: center; justify-content: center; }
.thumb b { width: 5px; height: 6px; border-top: 1px solid #999; border-bottom: 1px solid #999; }
.t-scroll .down { margin-top: auto; }
.dlg-actions { display: flex; gap: 3px; margin-top: 10px; flex: none; }
.dlg-actions .btn { width: 60px; line-height: 15px; }

.move-cursor { position: absolute; left: 221px; top: 406px; }
</style>
